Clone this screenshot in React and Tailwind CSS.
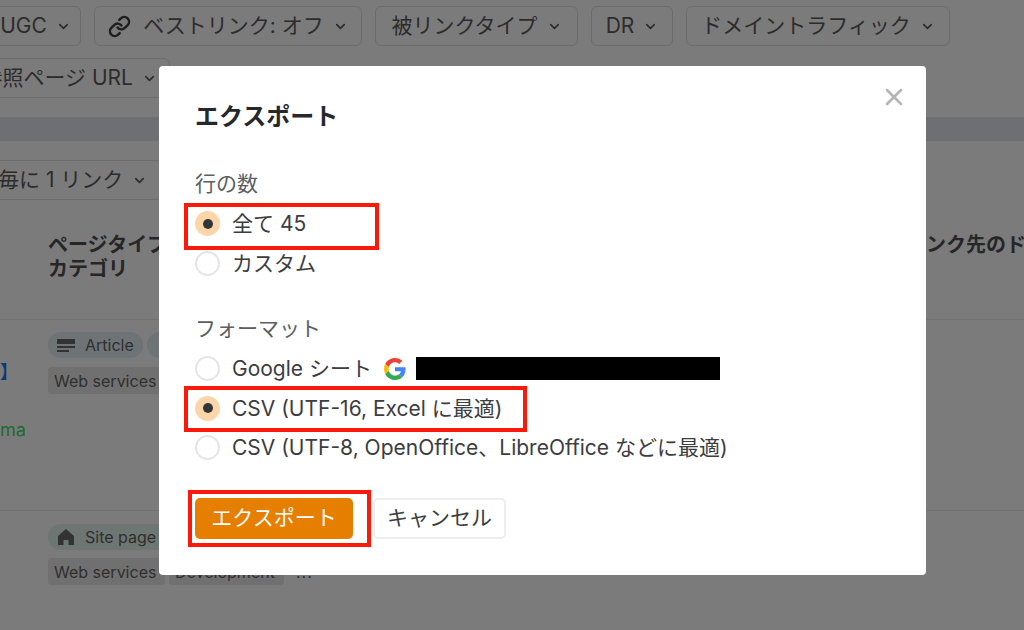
import { ChevronDown, Link, X } from 'lucide-react';

const FONT = "font-['Inter','Noto_Sans_CJK_JP',sans-serif]";

function Chip({ children, className = '' }) {
  return (
    <div className={`h-[40px] shrink-0 flex items-center justify-center gap-[9px] rounded-[6px] border border-[#6c6c6c] text-[21px] text-[#2c2c2c] whitespace-nowrap ${className}`}>
      {children}
      <ChevronDown size={15} strokeWidth={2.5} className="text-[#2a2a2a]" />
    </div>
  );
}

function Radio({ checked }) {
  if (checked) {
    return (
      <span className="w-[25px] h-[25px] shrink-0 rounded-full bg-[#fcd6a8] flex items-center justify-center">
        <span className="w-[10px] h-[10px] rounded-full bg-[#333639]" />
      </span>
    );
  }
  return <span className="w-[25px] h-[25px] shrink-0 rounded-full bg-white border-2 border-[#e4e5e6]" />;
}

function Option({ checked, children }) {
  return (
    <div className="h-[39.5px] flex items-center gap-[12px] text-[21px] text-[#3b3d40] whitespace-nowrap">
      <Radio checked={checked} />
      {children}
    </div>
  );
}

function GoogleMark() {
  return (
    <svg width="22" height="22" viewBox="0 0 48 48" className="shrink-0 -mr-[2px]">
      <path fill="#EA4335" d="M24 9.500c3.500 0 6.700 1.200 9.200 3.600l6.900-6.900C35.900 2.400 30.500 0 24 0 14.600 0 6.500 5.400 2.600 13.200l8 6.200C12.500 13.600 17.800 9.500 24 9.500z" />
      <path fill="#4285F4" d="M47 24.500c0-1.600-.1-3.100-.4-4.500H24v9h12.900c-.6 3-2.200 5.500-4.700 7.200l7.700 6c4.500-4.200 7.100-10.300 7.100-17.700z" />
      <path fill="#FBBC05" d="M10.600 28.600c-.5-1.400-.8-3-.8-4.600s.3-3.200.8-4.600l-8-6.200C.9 16.500 0 20.100 0 24s.9 7.500 2.600 10.800l8-6.200z" />
      <path fill="#34A853" d="M24 48c6.500 0 11.900-2.100 15.900-5.800l-7.700-6c-2.200 1.500-4.900 2.300-8.200 2.300-6.200 0-11.500-4.200-13.400-9.900l-8 6.200C6.500 42.600 14.600 48 24 48z" />
    </svg>
  );
}

function Background() {
  return (
    <div className="h-full flex flex-col text-[#2c2c2c]">
      <div className="flex flex-col gap-[12px] pt-[6px]">
        <div className="flex gap-[13px] -ml-[20px]">
          <Chip className="w-[101px] pl-[10px]">UGC</Chip>
          <Chip className="w-[268px]">
            <Link size={23} strokeWidth={2.6} className="text-[#1f1f1f] mr-[3px]" />
            ベストリンク: オフ
          </Chip>
          <Chip className="w-[203px]">被リンクタイプ</Chip>
          <Chip className="w-[82px]">DR</Chip>
          <Chip className="w-[264px]">ドメイントラフィック</Chip>
        </div>
        <div className="flex -ml-[40px]">
          <Chip className="w-[210px] justify-end pr-[12px]">参照ページ URL</Chip>
        </div>
      </div>
      <div className="h-[24px] mt-[19px] bg-[#6e6f72]" />
      <div className="-ml-[15px] mt-[19px]">
        <Chip className="w-[200px] justify-start pl-[12px]">毎に 1 リンク</Chip>
      </div>
      <div className="flex justify-between mt-[33px] text-[20px] font-semibold leading-[24px] text-[#262626] whitespace-nowrap">
        <div className="pl-[48px]">
          ページタイプ
          <br />
          カテゴリ
        </div>
        <div className="w-[98px]">ンク先のド</div>
      </div>
      <div className="mt-[38px] border-t border-[#727272]" />
      <div className="h-[190px] pl-[48px] pt-[12px]">
        <div className="flex gap-[4px]">
          <div className="h-[26px] w-[95px] rounded-full bg-[#6e7376] flex items-center gap-[10px] pl-[9px] text-[16px] text-[#2f2f2f]">
            <span className="w-[18px] flex flex-col gap-[2px]">
              <span className="h-[5px] bg-[#333]" />
              <span className="h-[2px] bg-[#333]" />
              <span className="h-[2px] w-[12px] bg-[#333]" />
            </span>
            Article
          </div>
          <div className="h-[26px] w-[30px] rounded-full bg-[#6e7376]" />
        </div>
        <div className="mt-[9px] h-[27px] w-[125px] rounded-[4px] bg-[#707070] flex items-center pl-[6px] text-[16px] text-[#2f2f2f]">
          Web services
        </div>
      </div>
      <div className="border-t border-[#727272]" />
      <div className="pl-[48px] pt-[13px]">
        <div className="h-[26px] w-[125px] rounded-full bg-[#6d7672] flex items-center gap-[10px] pl-[9px] text-[16px] text-[#2f2f2f]">
          <svg width="18" height="18" viewBox="0 0 18 18" className="shrink-0">
            <path fill="#333" d="M9 1 1 8v9h5.500v-5h5v5H17V8z" />
          </svg>
          Site page
        </div>
        <div className="mt-[8px] flex items-center gap-[4px] text-[16px] text-[#2f2f2f]">
          <div className="h-[27px] w-[117px] rounded-[4px] bg-[#707070] flex items-center pl-[6px]">Web services</div>
          <div className="h-[27px] w-[115px] rounded-[4px] bg-[#707070] flex items-center pl-[6px]">Development</div>
          <div className="pl-[8px] tracking-[1px]">...</div>
        </div>
      </div>
    </div>
  );
}

function Modal() {
  return (
    <div className="absolute left-[159px] top-[66px] w-[767px] h-[509px] bg-white rounded-[4px] pl-[36px] pt-[34px]">
      <X size={28} strokeWidth={2.2} className="absolute right-[18px] top-[17px] text-[#b5b5b5]" />
      <h2 className="text-[24px] leading-[34px] font-semibold text-[#26282b]">エクスポート</h2>
      <div className="mt-[35px] text-[21px] leading-[30px] text-[#5c5e61]">行の数</div>
      <div className="mt-[5px]">
        <Option checked>全て 45</Option>
        <Option>カスタム</Option>
      </div>
      <div className="mt-[31px] text-[21px] leading-[30px] text-[#5c5e61]">フォーマット</div>
      <div className="mt-[5px]">
        <Option>
          Google シート
          <GoogleMark />
          <span className="w-[304px] h-[23px] bg-black" />
        </Option>
        <Option checked>CSV (UTF-16, Excel に最適)</Option>
        <Option>CSV (UTF-8, OpenOffice、LibreOffice などに最適)</Option>
      </div>
      <div className="mt-[30px] flex gap-[20px] text-[21px]">
        <button className="w-[158px] h-[41px] rounded-[5px] bg-[#e67e00] text-white">エクスポート</button>
        <button className="w-[133px] h-[41px] rounded-[5px] bg-white border-2 border-[#eeeeee] text-[#3b3d40]">キャンセル</button>
      </div>
    </div>
  );
}

export default function App() {
  return (
    <div className={`relative w-[1024px] h-[630px] overflow-hidden bg-[#7b7b7b] ${FONT}`}>
      <Background />
      <span className="absolute left-0 top-[361px] text-[18px] leading-[22px] font-bold text-[#0b3a78]">】</span>
      <span className="absolute left-0 top-[418px] text-[18px] leading-[24px] text-[#1c6b32]">ma</span>
      <Modal />
      {/* red annotation boxes */}
      <div className="absolute left-[184px] top-[203px] w-[195px] h-[47px] border-[4px] border-[#fb1a0a]" />
      <div className="absolute left-[184px] top-[386px] w-[343px] h-[46px] border-[4px] border-[#fb1a0a]" />
      <div className="absolute left-[188px] top-[490px] w-[183px] h-[57px] border-[4px] border-[#fb1a0a]" />
    </div>
  );
}
